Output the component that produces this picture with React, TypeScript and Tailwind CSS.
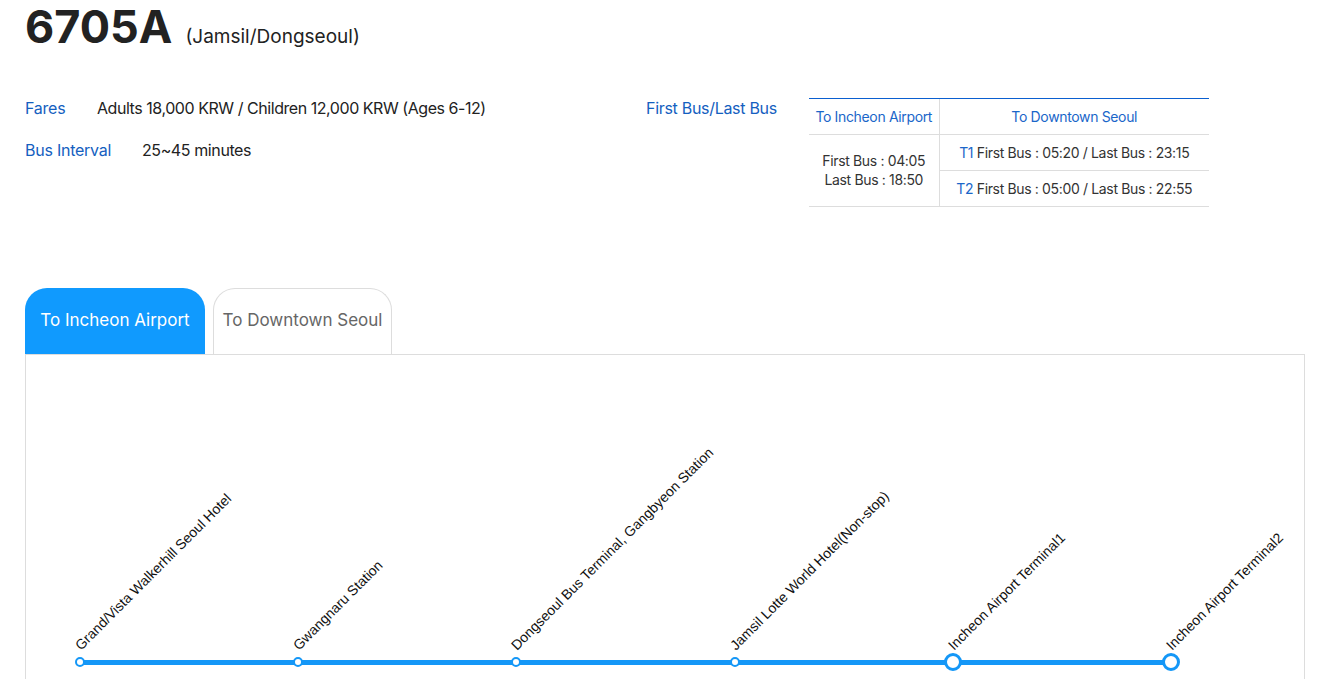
import React from "react";

const stops = [
  { name: "Grand/Vista Walkerhill Seoul Hotel", big: false },
  { name: "Gwangnaru Station", big: false },
  { name: "Dongseoul Bus Terminal, Gangbyeon Station", big: false },
  { name: "Jamsil Lotte World Hotel(Non-stop)", big: false },
  { name: "Incheon Airport Terminal1", big: true },
  { name: "Incheon Airport Terminal2", big: true },
];

export default function App() {
  return (
    <div className="min-h-[679px] bg-white px-[25px] pt-[2px] text-[#222]" style={{ fontFamily: "Inter, 'Noto Sans', sans-serif" }}>
      <div className="flex items-baseline gap-[13px]">
        <h1 className="text-[45px] font-bold leading-[50px] text-[#222]">6705A</h1>
        <span className="text-[19px] text-[#222]">(Jamsil/Dongseoul)</span>
      </div>

      <div className="mt-[44px] flex">
        <div className="w-[621px] text-[16px]">
          <div className="flex h-[24px] items-center">
            <span className="w-[72px] tracking-[-0.25px] text-[#1460c0]">Fares</span>
            <span className="tracking-[-0.45px]">Adults 18,000 KRW / Children 12,000 KRW (Ages 6-12)</span>
          </div>
          <div className="mt-[18px] flex h-[24px] items-center">
            <span className="w-[117px] tracking-[-0.25px] text-[#1460c0]">Bus Interval</span>
            <span className="tracking-[-0.4px]">25~45 minutes</span>
          </div>
        </div>
        <div className="flex">
          <div className="flex h-[24px] w-[163px] items-center text-[16px] tracking-[-0.3px] text-[#1460c0]">First Bus/Last Bus</div>
          <div className="mt-[2px] w-[400px]">
            <div className="h-px bg-[#0a5fd0]" />
            <table className="w-full border-collapse text-[14px] tracking-[-0.35px]">
              <thead>
                <tr className="h-[35px]">
                  <th className="w-[130px] border-r border-b border-[#dddddd] font-normal text-[#1a66c9]">To Incheon Airport</th>
                  <th className="border-b border-[#dddddd] font-normal text-[#1a66c9]">To Downtown Seoul</th>
                </tr>
              </thead>
              <tbody className="text-[#333]">
                <tr className="h-[36px] border-b border-[#dddddd]">
                  <td rowSpan={2} className="border-r border-b border-[#dddddd] text-center leading-[19px]">
                    First Bus : 04:05
                    <br />
                    Last Bus : 18:50
                  </td>
                  <td className="text-center">
                    <span className="text-[#1a66c9]">T1</span> First Bus : 05:20 / Last Bus : 23:15
                  </td>
                </tr>
                <tr className="h-[36px] border-b border-[#dddddd]">
                  <td className="text-center">
                    <span className="text-[#1a66c9]">T2</span> First Bus : 05:00 / Last Bus : 22:55
                  </td>
                </tr>
              </tbody>
            </table>
          </div>
        </div>
      </div>

      <div className="mt-[81px] flex items-end gap-[8px]">
        <div className="flex h-[66px] w-[180px] items-center justify-center rounded-t-[22px] bg-[#109afe] text-[17px] text-white">
          To Incheon Airport
        </div>
        <div className="flex h-[66px] w-[179px] items-center justify-center rounded-t-[22px] border border-b-0 border-[#dddddd] bg-white text-[17px] text-[#666]">
          To Downtown Seoul
        </div>
      </div>
      <div className="h-[330px] w-[1280px] border border-[#dddddd] pl-[54px] pt-[305px]">
        <div className="relative flex h-[5px] w-[1091px] items-center justify-between bg-[#1497f7]">
          {stops.map((s) => (
            <div key={s.name} className="relative flex h-[5px] w-0 items-center justify-center">
              <div
                className={
                  s.big
                    ? "h-[18px] w-[18px] shrink-0 rounded-full border-[3px] border-[#1497f7] bg-white"
                    : "h-[10px] w-[10px] shrink-0 rounded-full border-[2px] border-[#1497f7] bg-white"
                }
              />
              <div
                className="absolute bottom-[12px] left-[3px] origin-bottom-left -rotate-45 whitespace-nowrap text-[14px] leading-[16px] text-[#111]"
                style={{ fontFamily: "'Liberation Sans', Arial, sans-serif" }}
              >
                {s.name}
              </div>
            </div>
          ))}
        </div>
      </div>
    </div>
  );
}
